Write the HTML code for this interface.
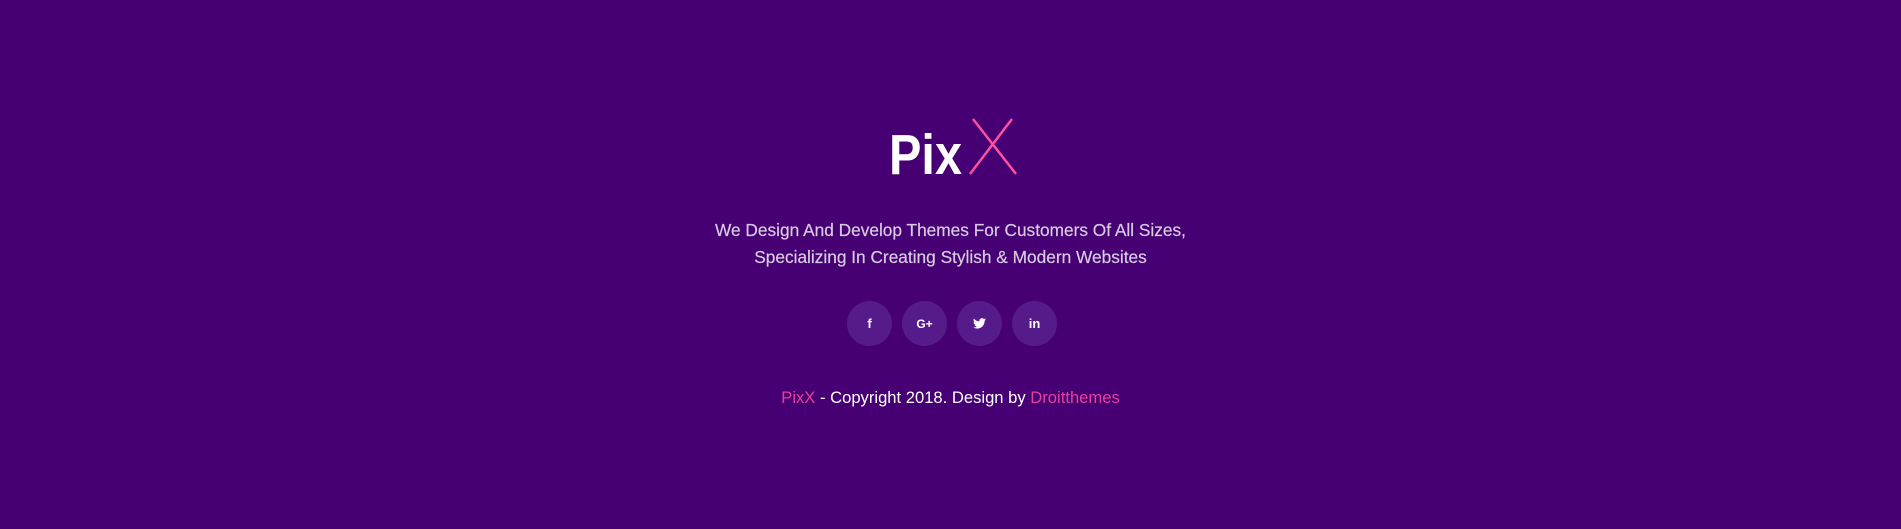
<!DOCTYPE html>
<html><head><meta charset="utf-8"><style>
html,body{margin:0;padding:0}
body{width:1901px;height:529px;background:#460073;position:relative;overflow:hidden;font-family:"Liberation Sans",sans-serif}
.logo{position:absolute;left:885px;top:115px}
.tag{position:absolute;left:0;width:1901px;top:217px;text-align:center;color:#d6cbe0;font-size:17.3px;line-height:27px;-webkit-text-stroke:0.2px #d6cbe0}
.soc{position:absolute;top:301px;width:45px;height:45px;border-radius:50%;background:#561b8a;color:#fff;display:flex;align-items:center;justify-content:center;font-weight:bold;font-size:13px}
.copy{position:absolute;left:0;width:1901px;top:387px;text-align:center;color:#fff;font-size:16.6px;line-height:22px}
.pk{color:#e6409e}
</style></head><body>
<svg class="logo" width="140" height="65" viewBox="0 0 140 65">
<text x="4" y="59" fill="#fff" font-family="Liberation Sans" font-weight="bold" font-size="57" textLength="73" lengthAdjust="spacingAndGlyphs">Pix</text>
<line x1="85" y1="59" x2="127" y2="4" stroke="#ff4fa3" stroke-width="2.5"/>
<line x1="88" y1="4" x2="131" y2="59" stroke="#ff4fa3" stroke-width="2.5"/>
</svg>
<div class="tag">We Design And Develop Themes For Customers Of All Sizes,<br>Specializing In Creating Stylish &amp; Modern Websites</div>
<div class="soc" style="left:847px">f</div>
<div class="soc" style="left:902px;font-size:12px">G+</div>
<div class="soc" style="left:957px"><svg width="13" height="11" viewBox="0 0 24 20"><path fill="#fff" d="M24 2.4a10 10 0 0 1-2.8.8A5 5 0 0 0 23.3.5a10 10 0 0 1-3.1 1.2A4.9 4.9 0 0 0 11.8 6 14 14 0 0 1 1.7.9a4.9 4.9 0 0 0 1.5 6.6A5 5 0 0 1 1 6.9a4.9 4.9 0 0 0 3.9 4.8 5 5 0 0 1-2.2.1 4.9 4.9 0 0 0 4.6 3.4A9.9 9.9 0 0 1 0 17.2 14 14 0 0 0 7.5 19.4c9.1 0 14-7.5 14-14v-.6A10 10 0 0 0 24 2.4z"/></svg></div>
<div class="soc" style="left:1012px">in</div>
<div class="copy"><span class="pk">PixX</span> - Copyright 2018. Design by <span class="pk">Droitthemes</span></div>
</body></html>
